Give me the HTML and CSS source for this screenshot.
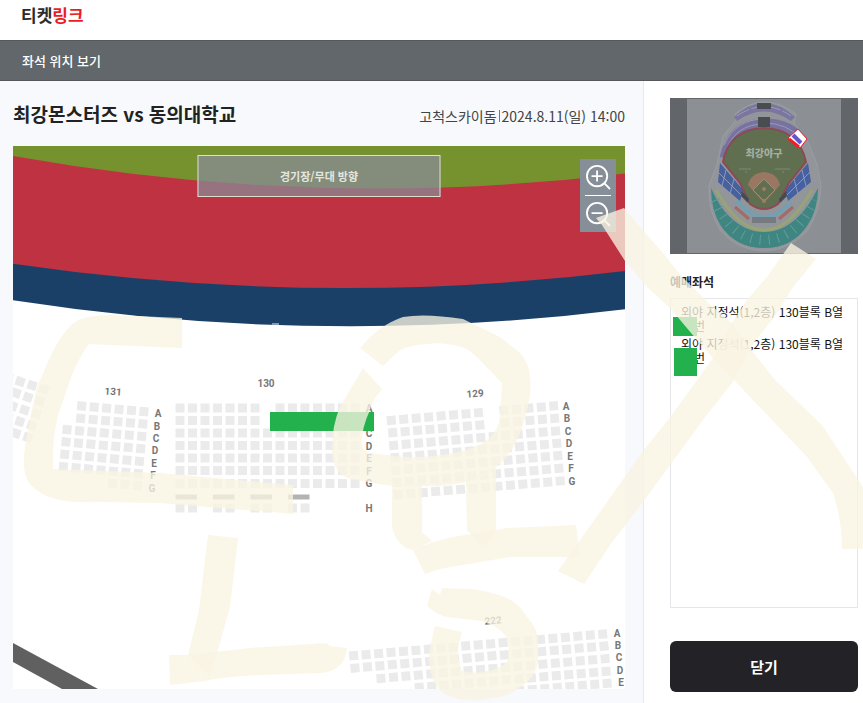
FILE: index.html
```
<!DOCTYPE html>
<html lang="ko">
<head>
    <meta charset="UTF-8">
    <meta name="viewport" content="width=device-width, initial-scale=1.0">
    <title>티켓링크</title>
    <link rel="stylesheet" href="styles.css">
</head>
<body>
<header class="top">
    <a class="logo" href="#">티켓<span>링크</span></a>
</header>
<div class="bar">좌석 위치 보기</div>
<main class="content">
    <section class="seats">
        <div class="info">
            <h1>최강몬스터즈 vs 동의대학교</h1>
            <p><span class="place">고척스카이돔</span>2024.8.11(일) 14:00</p>
        </div>
        <div class="map">
            <svg class="mapa" viewBox="13 146 612 543">
                <rect x="13" y="146" width="612" height="543" fill="#fff"/>
                <!-- field -->
                <path fill="#1b4067" d="M13 146H625V309.300Q319 347.400 13 300.300Z"/>
                <path fill="#bf3241" d="M13 146H625V271Q319 308.400 13 263.700Z"/>
                <path fill="#76922f" d="M13 146H625V173.500Q319 210.600 13 156Z"/>
                <path fill="#606060" d="M13 643L98 689H62L13 662Z"/>
                <!-- seats -->
                <g class="rows">
                    <path d="M4 376.300L49.500 391M0 387.700L45 403M8.400 404.600L40.600 415.400M3.700 416.200L36.400 427M11.700 432L32.500 438.800"/>
                    <path d="M77.200 405.600L149 412M76.200 418L148 424.400M62.500 429.300L146.500 436.700M61.500 441.600L145.500 449M60.200 454L144 461.700M59 466.300L143 474M108 482.900L142.500 486"/>
                    <path d="M175.500 408H260M275.500 408H360M175.500 420.500H260M275.500 420.500H360M175.500 433H360M175.500 445.500H360M175.500 458H360M175.500 470.500H360M175.500 483.500H360"/>
                    <path d="M175.500 508H197M213 508H234.500M250.500 508H272M288 508H309.500"/>
                    <path d="M386.800 420.700L483.500 412.300M499.500 410.700L558 405.600M388.200 433L485 424.600M500.500 423L559 418M389.200 445.700L560.500 430.600M390.500 458L561.700 443M391.500 470.400L562.500 455.300M392.500 482.700L563.800 468M393.800 495L565 480.600"/>
                    <path d="M349.200 656.100L608 633.600M350.500 668.400L609 645.600M376.500 678.700L610.200 658.300M414.800 687.700L611.200 671M515.500 691L612.200 683"/>
                </g>
                <path stroke="#b3b3b3" stroke-width="5" d="M175.500 497H197M213 497H234.500M250.500 497H272M288 497H309.500"/>
                <path stroke="#8799ad" stroke-width="2" d="M272 324H279"/>
                <g class="block">
                    <text x="113" y="395" transform="rotate(4 113 392)">131</text>
                    <text x="266" y="387">130</text>
                    <text x="475" y="397" transform="rotate(-5 475 393)">129</text>
                    <text x="493" y="624" transform="rotate(-5 493 620)">222</text>
                </g>
                <g class="letters">
                    <text x="158" y="417">A</text><text x="157" y="430">B</text><text x="156" y="442">C</text><text x="155" y="454">D</text><text x="154" y="467">E</text><text x="153" y="479">F</text><text x="152" y="492">G</text>
                    <text x="369" y="412">A</text><text x="369" y="437">C</text><text x="369" y="450">D</text><text x="369" y="462">E</text><text x="369" y="475">F</text><text x="369" y="487">G</text><text x="369" y="512">H</text>
                    <text x="566" y="410">A</text><text x="567" y="422">B</text><text x="568" y="435">C</text><text x="569" y="447">D</text><text x="570" y="460">E</text><text x="571" y="472">F</text><text x="572" y="485">G</text>
                    <text x="617" y="637">A</text><text x="618" y="649">B</text><text x="619" y="661">C</text><text x="620" y="674">D</text><text x="621" y="686">E</text>
                </g>
            </svg>
            <div class="stage">경기장/무대 방향</div>
            <div class="zoom">
                <button type="button" aria-label="확대">
                    <svg viewBox="0 0 26 26"><circle cx="12" cy="12" r="11"/><path d="M12 6V18M6 12H18M20 20L26 26"/></svg>
                </button>
                <button type="button" aria-label="축소">
                    <svg viewBox="0 0 26 26"><circle cx="12" cy="12" r="11"/><path d="M6 12H18M20 20L26 26"/></svg>
                </button>
            </div>
        </div>
    </section>
    <aside class="side">
        <svg class="mini" viewBox="0 0 188 156">
            <rect width="188" height="156" fill="#62666a"/>
            <rect x="17" y="1" width="154" height="154" fill="#8c9094"/>
            <!-- outer walls -->
            <path fill="#92969a" stroke="#9a9da2" d="M65 16Q94 -8 126 16L124 25L138 44L147 66L151 88Q150 115 137 133Q120 152 94 153Q67 152 51 133Q38 115 39 88L47 66L53 38L66 22Z"/>
            <path fill="#7a76a0" d="M64 19Q94 -9 125 19L121 23Q94 4 67 23Z"/>
            <path fill="none" stroke="#9b98b9" d="M67 18Q94 -1 121 18" stroke-dasharray="14 2"/>
            <path fill="none" stroke="#7872a0" stroke-width="9" d="M54 60Q62 25 94 25Q122 25 133 44"/>
            <path fill="none" stroke="#9c99b8" stroke-width="1" d="M54 47Q66 21 94 21M94 25Q117 25 130 40M57 50Q67 26 94 26"/>
            <path fill="#4a4d50" d="M87 5H101V11H87ZM88 19H100V29H88Z"/>
            <path fill="#4660a0" d="M50 65L73 92L70 103L48 84ZM138 65L115 92L118 103L141 84Z"/>
            <path fill="none" stroke="#8b9ab3" stroke-width="1" d="M48 74L72 98M56 72L52 88M64 81L60 96M140 74L116 98M132 72L136 88M124 81L128 96"/>
            <path fill="none" stroke="#6fa0b5" stroke-width="4" stroke-dasharray="6 1" d="M67 103Q80 119 94 119Q108 119 121 103"/>
            <path fill="none" stroke="#a36b68" stroke-width="3" d="M65 109L79 121M123 109L109 121"/>
            <path fill="#777b80" d="M82 119H106V125H82Z"/>
            <path fill="none" stroke="#98a475" stroke-width="3" d="M46 92Q68 132 94 132Q120 132 142 92"/>
            <path fill="#3f8581" d="M41 90Q41 112 51 128Q66 150 94 150Q122 150 137 128Q148 112 148 90Q139 108 130 117Q114 134 94 134Q74 134 58 117Q49 108 41 90Z"/>
            <path fill="none" stroke="#659d99" stroke-dasharray="1 8" stroke-width="10" d="M45 102Q62 142 94 142Q126 142 144 102"/>
            <path fill="#5f6f50" stroke="#8b4a56" stroke-width="2" d="M53 64Q59 31 94 30Q129 31 136 64L119 85L108 106Q94 116 80 106L70 85Z"/>
            <path fill="#9a7762" d="M78 87Q81 75 94 74Q107 75 110 87L94 105Z"/>
            <path fill="#5f6f50" stroke="#a38a73" d="M94 81L105 92L94 103L83 92Z"/>
            <circle cx="94" cy="91" r="2" fill="#a17d65"/>
            <circle cx="94" cy="103" r="2" fill="#a17d65"/>
            <path fill="#454b50" d="M72 93L79 101L78 105L71 98ZM116 93L109 101L110 105L117 98Z"/>
            <path stroke="#7f8a75" d="M69 71H81M105 71H120M75 74H77M112 74H114"/>
            <text x="94" y="59" class="team">최강야구</text>
            <path fill="#fff" stroke="#f01d2b" stroke-width="1" d="M128 31L137 41L130 50L118 40Z"/>
            <path stroke="#6256c9" stroke-width="4" d="M123 37L131 45"/>
            <path stroke="#f01d2b" stroke-width="3" d="M119 41L129 49"/>
        </svg>
        <h2>예매좌석</h2>
        <ul class="list">
            <li>외야 지정석(1,2층) 130블록 B열 <span>번</span></li>
            <li>외야 지정석(1,2층) 130블록 B열 <span>번</span></li>
        </ul>
        <button type="button" class="close">닫기</button>
    </aside>
</main>
<svg class="marks" viewBox="0 0 863 703">
    <path fill="#22b14c" d="M270 412H374V431H270ZM673 317H697V336H673Z"/>
    <g class="pen">
        <path d="M182 318L112 315Q83 315 72 324Q58 338 48 362L37 387Q27 430 24 455Q23 475 29 483Q40 496 60 500Q75 503 100 502L160 503Q220 508 293 514V485L160 473L53 469Q52 440 58 415L72 375Q80 355 89 344L182 348Z"/>
        <path d="M360 348Q379 325 403 317Q425 313 463 319L500 337L520 353Q530 365 530 377Q533 397 520 433Q512 455 496 467Q484 480 467 482Q445 487 420 486Q385 487 370 482Q345 480 340 473Q332 465 332 450Q332 425 340 407L363 368L382 389Q371 402 370 410Q361 430 362 443Q362 452 370 453L403 457Q430 458 453 453Q475 449 487 440Q499 430 500 417L502 383L477 357Q465 346 453 345Q440 342 427 344Q411 345 400 350L383 366Z"/>
        <path d="M392 484H422V532L432 541L413 550Q405 549 400 543Q393 536 392 525Z"/>
        <path d="M466 481L496 467V530L483 547L467 530Z"/>
        <path d="M413 550Q430 542 453 537L507 528L576 525L580 557H510L463 565Q440 568 425 574Z"/>
        <path d="M208 535L238 538L230 607L218 650L209 676L188 655L199 610Z"/>
        <path d="M169 655H188L250 648L327 643L330 646L347 648Q346 659 340 665Q334 672 320 673L260 675Q220 677 205 681L170 685Z"/>
        <path d="M432 589L440 595L442 588L470 589Q490 591 507 598Q520 605 527 617Q538 629 538 640Q539 657 537 667Q532 681 520 687Q508 697 493 698Q480 701 467 700Q453 699 443 693Q433 685 431 673Q428 660 430 647L435 626L462 632Q457 649 458 657L462 671Q475 674 487 671Q500 669 507 662Q510 652 508 643Q507 634 497 628Q485 620 473 620L447 617Q437 615 427 606Z"/>
        <path d="M791 243L816 259L793 287L777 313L753 344L732 383L703 420L643 502L610 545L584 584L558 571L600 512L643 451L668 420L713 358L732 323L747 300L767 277Z"/>
        <path d="M596 218L624 208L640 227L663 253L683 278L713 307L732 323L750 348L775 380L822 425L863 487V549H842Q842 520 833 493L807 457L734 380L713 358L697 340L670 308L647 287L625 261L602 225Z"/>
    </g>
    <path fill="#22b14c" d="M674 348H697V376H674Z"/>
</svg>
</body>
</html>
```
FILE: styles.css
```
*{
    margin: 0;
    padding: 0;
    box-sizing: border-box;
}
body{
    position: relative;
    display: flex;
    flex-direction: column;
    min-height: 100vh;
    background: white;
    font-family: "Noto Sans CJK KR", sans-serif;
    color: #222;
}
svg{
    display: block;
}
button{
    font-family: inherit;
    border: none;
    cursor: pointer;
}
.top{
    height: 40px;
    padding: 2px 21px;
}
.logo{
    color: #2e2b2c;
    font-size: 17px;
    line-height: 25px;
    font-weight: 700;
    text-decoration: none;
}
.logo span{
    color: #ea1c24;
}
.bar{
    height: 41px;
    padding-left: 22px;
    background: #62676b;
    border-top: 1px solid #55585b;
    border-bottom: 1px solid #55585b;
    color: white;
    font-size: 13px;
    font-weight: 500;
    line-height: 39px;
}
.content{
    display: flex;
    flex: 1;
}
.seats{
    flex: 1;
    padding: 0 18px 14px 13px;
    background: #f7f9fc;
    border-right: 1px solid #e6e9ef;
}
.info{
    display: flex;
    justify-content: space-between;
    align-items: center;
    height: 65px;
}
.info h1{
    font-size: 19px;
    font-weight: 700;
}
.info p{
    padding-top: 4px;
    font-size: 14px;
    color: #444;
}
.place{
    margin-right: 2px;
    padding-right: 3px;
    background: linear-gradient(#777, #777) right center / 1px 12px no-repeat;
}
.map{
    position: relative;
}
.mapa{
    width: 100%;
}
.rows{
    stroke: #ebebec;
    stroke-width: 9;
    stroke-dasharray: 9 3.5;
    fill: none;
}
.block, .letters{
    font-family: Roboto, sans-serif;
    font-size: 10px;
    font-weight: 700;
    fill: #777;
    text-anchor: middle;
}
.stage{
    position: absolute;
    top: 9px;
    left: 50%;
    width: 243px;
    height: 42px;
    transform: translateX(-50%);
    background: rgba(137, 137, 150, 0.75);
    border: 1px solid #dce0cf;
    color: #e4e6dd;
    font-size: 11px;
    font-weight: 700;
    line-height: 40px;
    text-align: center;
}
.zoom{
    position: absolute;
    top: 13px;
    right: 9px;
    width: 36px;
    padding: 0 5px;
    background: #868e98;
}
.zoom button{
    display: block;
    width: 26px;
    height: 36px;
    background: none;
}
.zoom button + button{
    border-top: 1px solid white;
    height: 37px;
}
.zoom svg{
    width: 24px;
    margin: 0 auto;
    fill: none;
    stroke: white;
    stroke-width: 2;
    overflow: visible;
}
.side{
    display: flex;
    flex-direction: column;
    width: 219px;
    padding: 17px 5px 11px 26px;
}
.mini{
    width: 100%;
}
.team{
    font-size: 10px;
    font-weight: 900;
    fill: #a6ada2;
    text-anchor: middle;
}
.side h2{
    padding: 18px 0 6px;
    font-size: 12px;
    line-height: 20px;
}
.list{
    flex: 1;
    padding: 6px 10px;
    border: 1px solid #e4e6ea;
    list-style: none;
}
.list li{
    margin-bottom: 4px;
    color: #111;
    font-size: 12px;
    line-height: 14px;
}
.list span{
    display: block;
    padding-left: 13px;
}
.close{
    height: 51px;
    margin-top: 33px;
    border-radius: 6px;
    background: #232227;
    color: white;
    font-size: 15px;
    font-weight: 700;
}
/* pen marks over the page */
.marks{
    position: absolute;
    top: 0;
    left: 0;
    width: 100%;
    pointer-events: none;
}
.pen{
    fill: #f8f4e2;
    fill-opacity: 0.78;
}
```
